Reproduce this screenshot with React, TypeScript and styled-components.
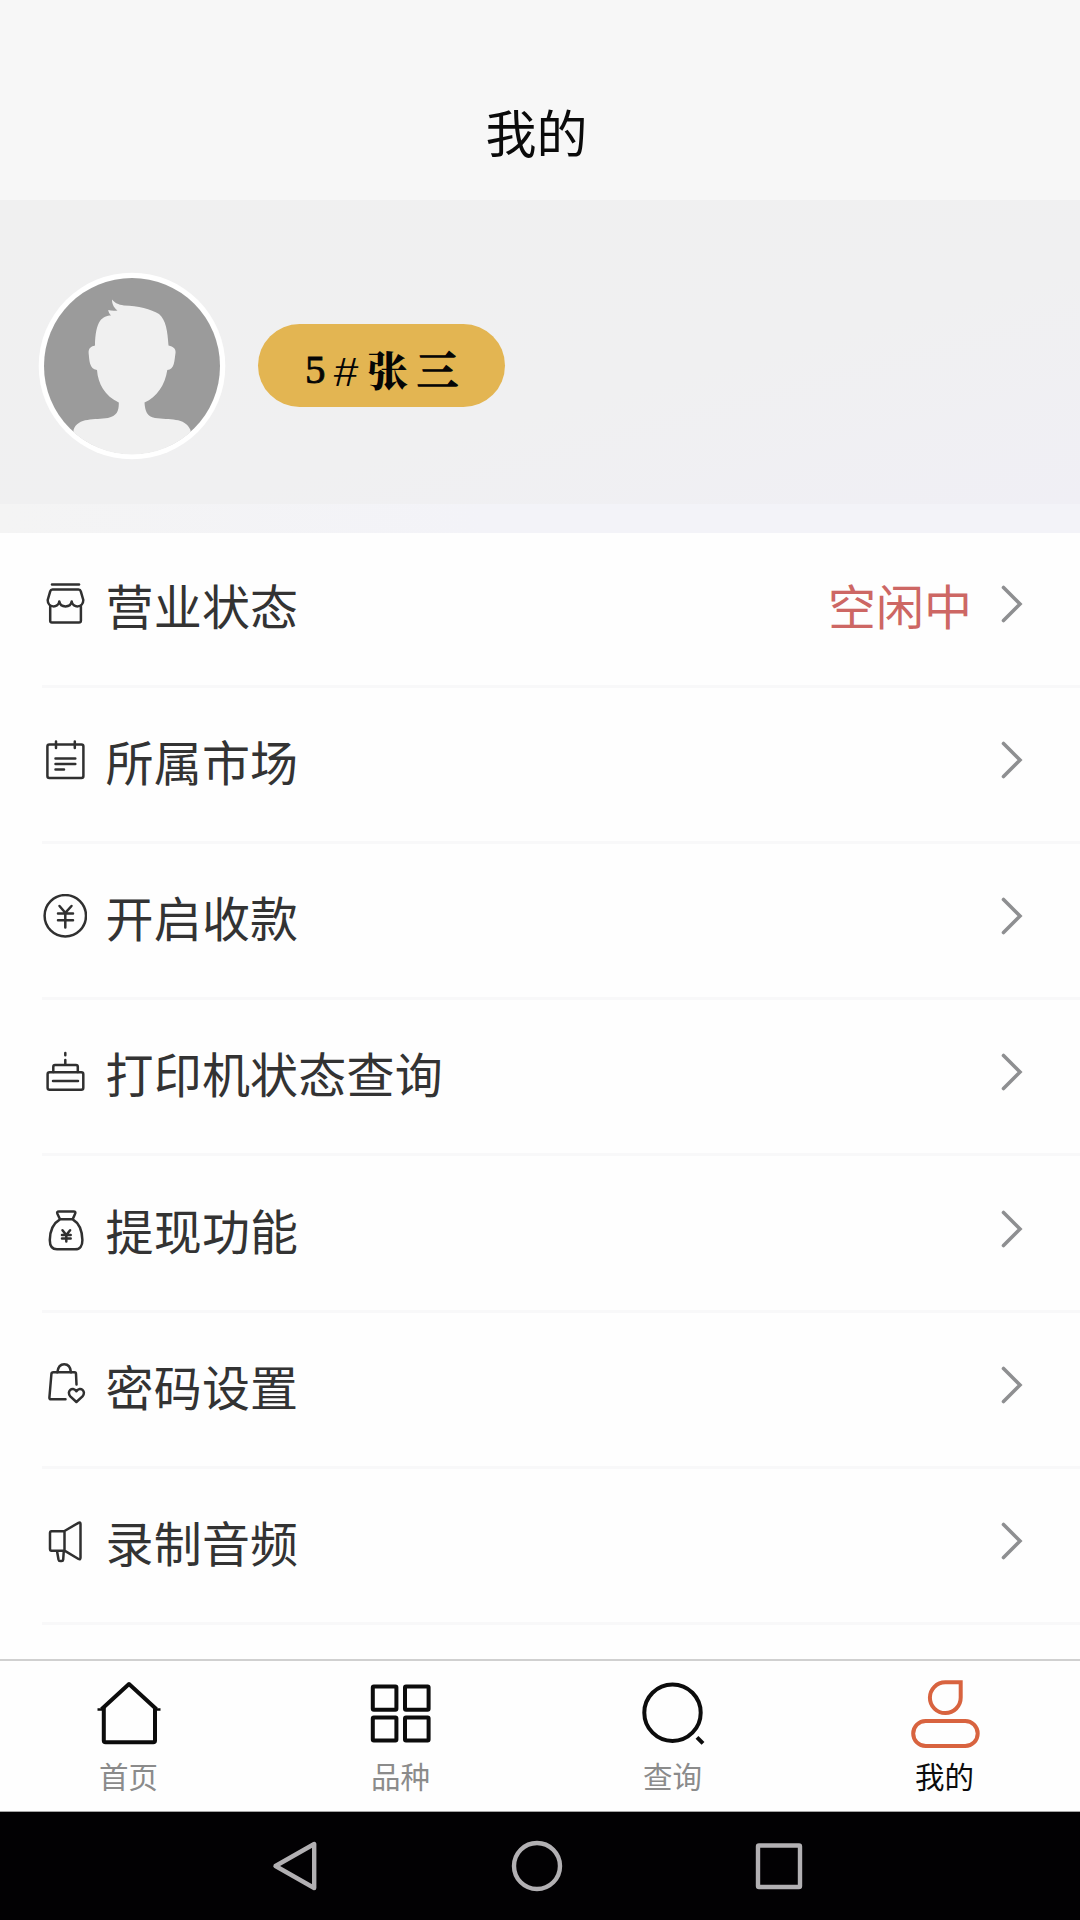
import React from "react";
import styled, { createGlobalStyle } from "styled-components";

const Global = createGlobalStyle`
  * { box-sizing: border-box; }
  body {
    margin: 0;
    background: #fefefe;
    font-family: "Noto Sans CJK SC", sans-serif;
  }
`;

const Screen = styled.div`
  width: 1080px;
  height: 1920px;
  display: flex;
  flex-direction: column;
  overflow: hidden;
  background: #fefefe;
`;

const Header = styled.header`
  height: 200px;
  flex: none;
  padding: 93px 7px 0 0;
  background: #f7f7f7;
  text-align: center;
`;

const Title = styled.h1`
  margin: 0;
  font-size: 51px;
  line-height: 76px;
  font-weight: 400;
  color: #0a0a0a;
`;

const Profile = styled.section`
  height: 304px;
  flex: none;
  display: flex;
  align-items: center;
  gap: 32px;
  padding: 27px 0 0 38px;
  background: linear-gradient(165deg, #f0f0f0 0%, #f0f0f1 60%, #f0eff5 100%);
`;

const AvatarSvg = styled.svg`
  width: 188px;
  height: 188px;
  flex: none;
`;

const NameBadge = styled.div`
  width: 247px;
  height: 83px;
  display: flex;
  align-items: center;
  padding: 6px 0 0 47px;
  border-radius: 42px;
  background: #e3b552;
  color: #050505;
  font-family: "Noto Serif CJK SC", "Liberation Serif", "Noto Sans CJK SC", serif;
  font-size: 40px;
  line-height: 60px;
  white-space: nowrap;
`;

const NameHan = styled.span<{ $stroke?: number }>`
  width: 50px;
  font-size: 41px;
  font-weight: 900;
  -webkit-text-stroke: ${(p) => p.$stroke ?? 0}px #050505;
`;

const NameDigit = styled.span`
  width: 23px;
  font-family: "Liberation Serif", serif;
  font-size: 41px;
  -webkit-text-stroke: 0.8px #050505;
`;

const NameHash = styled.span`
  width: 36px;
  margin-right: 3px;
  font-family: "Noto Sans CJK SC", sans-serif;
  font-weight: 300;
  font-size: 39px;
  text-align: center;
  transform: scaleX(1.3) skewX(-4deg);
`;

const Strip = styled.div`
  height: 29px;
  flex: none;
  background: linear-gradient(90deg, #f4f4f4 0%, #f3f3f8 45%);
`;

const Menu = styled.main`
  height: 1126px;
  flex: none;
  display: flex;
  flex-direction: column;
`;

const Row = styled.div<{ $first?: boolean }>`
  height: ${(p) => (p.$first ? 154.5 : 156.33)}px;
  flex: none;
  margin-left: 42px;
  padding: 0 56px 51px 1px;
  display: flex;
  align-items: flex-end;
  border-bottom: 3px solid #f8f8f9;
`;

const RowIcon = styled.svg`
  width: 44px;
  height: 44px;
  flex: none;
  margin-bottom: 8px;
  fill: none;
  stroke: #303030;
  stroke-width: 2.5;
  stroke-linecap: round;
  stroke-linejoin: round;
`;

const Label = styled.span`
  flex: 1;
  margin-left: 18.5px;
  font-size: 48px;
  line-height: 60px;
  letter-spacing: 0.2px;
  color: #333;
`;

const Status = styled.span`
  margin-right: 26px;
  font-size: 48px;
  line-height: 60px;
  color: #cd6764;
`;

const Chevron = styled.svg`
  width: 26px;
  height: 44px;
  flex: none;
  margin-bottom: 8px;
  fill: none;
  stroke: #8e8f91;
  stroke-width: 3.6;
  stroke-linecap: round;
`;

const TabBar = styled.nav`
  height: 153px;
  flex: none;
  display: flex;
  gap: 172px;
  padding: 15px 0 0 78.5px;
  border-top: 2px solid #d0d0d0;
  border-bottom: 1px solid #a5a5a5;
`;

const Tab = styled.div<{ $active?: boolean }>`
  width: 100px;
  display: flex;
  flex-direction: column;
  align-items: center;
  font-size: 29.5px;
  line-height: 44px;
  color: ${(p) => (p.$active ? "#0c0c0c" : "#8b8b8b")};
`;

const TabIcon = styled.svg`
  width: 72px;
  height: 72px;
  margin-bottom: 5px;
  fill: none;
  stroke: #0c0c0c;
  stroke-width: 4;
`;

const SystemBar = styled.footer`
  height: 108px;
  flex: none;
  display: flex;
  align-items: center;
  gap: 186px;
  padding-left: 267px;
  background: #020103;
`;

const SystemIcon = styled.svg`
  width: 56px;
  height: 56px;
  fill: none;
  stroke: #b2b0b3;
  stroke-width: 4.4;
  stroke-linejoin: round;
`;

const Avatar = () => (
  <AvatarSvg viewBox="0 0 188 188">
    <defs>
      <clipPath id="face">
        <circle cx="94" cy="94" r="88.5" />
      </clipPath>
    </defs>
    <circle cx="94" cy="94" r="93.3" fill="#fff" />
    <circle cx="94" cy="94" r="88" fill="#9b9b9b" />
    <path
      clipPath="url(#face)"
      fill="#f0f0f0"
      d="M74 27.500C77 31 80 32.500 86 33.500C100 34 113 37 121 42C128 48 129.500 59 130.500 73.500C136 75 138 77 137.500 81C136.500 88 136.500 98 129.300 98C127 113 119 125 106.500 130.500C107 139 109 144.500 117 146C131 148 147 145 152.500 158V190H35.500V158C40 145 57 148 70 146C79 144 81 139 80.800 130.500C67 124 60 112 59 98C51 97 51.500 88 50.600 81C50.500 76 53 74.500 57 73.500C57 62 59 53 62 49C65 45 69 43.500 73 43.500C71.500 42 70.500 40 70.200 38C73 38.800 76 39 79.500 38.500C75 35 74 31 74 27.500Z"
    />
  </AvatarSvg>
);

const rows: { label: string; status?: string; icon: React.ReactNode }[] = [
  {
    label: "营业状态",
    status: "空闲中",
    icon: (
      <>
        <path d="M9 2.600H36" />
        <path d="M9.500 7.600H35.500Q37.300 7.600 37.800 9.300L40.300 18C40.300 26.500 29.500 26 28.700 19.500C27.500 26 17.500 26 16.300 19.500C15.500 26 4.700 26.500 4.700 18L7.200 9.300Q7.700 7.600 9.500 7.600Z" />
        <path d="M7.200 24.500V38.800Q7.200 40.600 9 40.600H36Q37.900 40.600 37.900 38.800V24.500" />
      </>
    ),
  },
  {
    label: "所属市场",
    icon: (
      <>
        <rect x="4.400" y="6.600" width="36" height="33.300" rx="2" />
        <path d="M13 3.600V9.900M31.800 3.600V9.900M12.500 20.600H32.300M12.500 25.900H32.300M12.500 31.400H21" />
      </>
    ),
  },
  {
    label: "开启收款",
    icon: (
      <>
        <circle cx="22.300" cy="21.800" r="20.700" />
        <path d="M16.500 12L22.300 18.800L28.500 12M22.300 18.800V33.500M15 19.500H30M15 26.300H30" />
      </>
    ),
  },
  {
    label: "打印机状态查询",
    icon: (
      <>
        <path d="M22.300 3V5.200M22.300 10V15M10.300 22V16.800Q10.300 15 12 15H33Q34.800 15 34.800 16.800V22M10 31H35" />
        <rect x="4.600" y="22.300" width="35.700" height="17.400" rx="2" />
      </>
    ),
  },
  {
    label: "提现功能",
    icon: (
      <>
        <path d="M17 12.300L14.500 7Q13.300 4.500 16 4.500H30.500Q33.300 4.500 32 7L29.700 12.300ZM17 12.300C10.500 16 7 24 6.800 33C6.800 39 9 42.300 14 42.300H32C37 42.300 39.500 39 39.400 33C39.200 24 36 16 29.700 12.300" />
        <path d="M19.500 23.300L23.300 28L27.100 23.300M23.300 28V34.500M19 28H27.700M19 31.500H27.700" />
      </>
    ),
  },
  {
    label: "密码设置",
    icon: (
      <>
        <path d="M14.300 9.300C15 4 17.500 1.300 21.200 1.300S27.500 4 28 9.300" />
        <path d="M22.500 36.300H8Q6.300 36.300 6.400 34.500L8.400 11Q8.600 9.300 10.300 9.300H31.500Q33 9.300 33 11L33.500 21.500" />
        <path d="M33.400 39L27.300 33.300C23 28.500 29.500 22.500 33.400 28.300C37.300 22.500 43.800 28.500 39.500 33.300Z" />
      </>
    ),
  },
  {
    label: "录制音频",
    icon: (
      <path d="M21.500 12.300H8.500Q7 12.300 7 14V30Q7 31.700 8.500 31.700H21.500ZM21.500 12L35.500 3.800Q37.500 2.700 37.500 5V38.500Q37.500 41 35.500 40L21.500 31.700M14 32L15.500 40.500Q15.800 42 17 42H18.700Q20 42 20.200 40.500L20.700 33" />
    ),
  },
];

const tabs: { label: string; active?: boolean; icon: React.ReactNode }[] = [
  {
    label: "首页",
    icon: (
      <>
        <path strokeLinejoin="round" d="M8.500 33.300L36 8L63.500 33.300" />
        <path d="M4.500 33.500H12M60 33.500H67.500" strokeWidth="2.500" />
        <path d="M10.800 31V64.500Q10.800 66.300 12.600 66.300H60.200Q62 66.300 62 64.500V31" />
      </>
    ),
  },
  {
    label: "品种",
    icon: (
      <>
        <rect x="7.800" y="10.400" width="23.600" height="23.400" rx="1" />
        <rect x="40" y="10.400" width="23.600" height="23.400" rx="1" />
        <rect x="7.800" y="41.600" width="23.600" height="23" rx="1" />
        <rect x="40" y="41.600" width="23.600" height="23" rx="1" />
      </>
    ),
  },
  {
    label: "查询",
    icon: (
      <>
        <circle cx="35.500" cy="36.700" r="28.200" />
        <path d="M60 61.300L66 67.300" />
      </>
    ),
  },
  {
    label: "我的",
    active: true,
    icon: (
      <g stroke="#d8633f">
        <path d="M36.300 6.300H51.700V21.600A15.400 15.400 0 1 1 36.300 6.300Z" />
        <rect x="4.200" y="45" width="64.500" height="25" rx="12.500" />
      </g>
    ),
  },
];

export default function App() {
  return (
    <Screen>
      <Global />
      <Header>
        <Title>我的</Title>
      </Header>
      <Profile>
        <Avatar />
        <NameBadge>
          <NameDigit>5</NameDigit>
          <NameHash>#</NameHash>
          <NameHan>张</NameHan>
          <NameHan $stroke={1.3}>三</NameHan>
        </NameBadge>
      </Profile>
      <Strip />
      <Menu>
        {rows.map((row, i) => (
          <Row key={row.label} $first={i === 0}>
            <RowIcon viewBox="0 0 44 44">{row.icon}</RowIcon>
            <Label>{row.label}</Label>
            {row.status && <Status>{row.status}</Status>}
            <Chevron viewBox="0 0 26 44">
              <path d="M5.500 5.500L22 22L5.500 38.500" />
            </Chevron>
          </Row>
        ))}
      </Menu>
      <TabBar>
        {tabs.map((tab) => (
          <Tab key={tab.label} $active={tab.active}>
            <TabIcon viewBox="0 0 72 72">{tab.icon}</TabIcon>
            {tab.label}
          </Tab>
        ))}
      </TabBar>
      <SystemBar>
        <SystemIcon viewBox="0 0 56 56">
          <path d="M47.200 6V50L8.500 28Z" />
        </SystemIcon>
        <SystemIcon viewBox="0 0 56 56">
          <circle cx="28" cy="28" r="23" />
        </SystemIcon>
        <SystemIcon viewBox="0 0 56 56">
          <rect x="7" y="7.500" width="42" height="41.500" rx="1" />
        </SystemIcon>
      </SystemBar>
    </Screen>
  );
}
